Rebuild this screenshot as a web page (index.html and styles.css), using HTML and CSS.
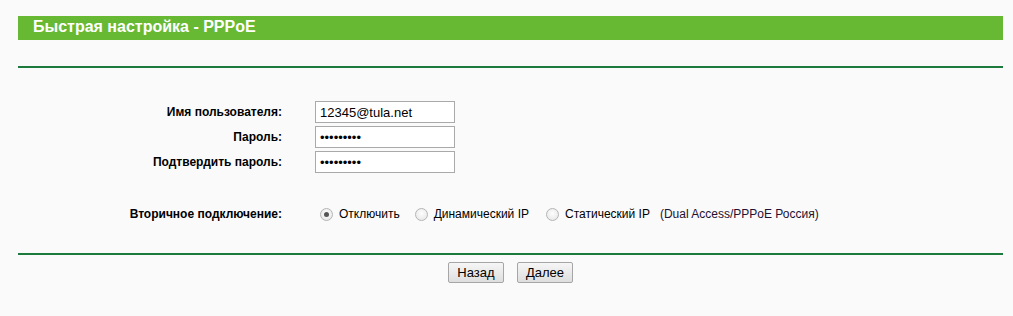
FILE: index.html
```html
<!DOCTYPE html>
<html lang="ru">
<head>
<meta charset="utf-8">
<title>Быстрая настройка - PPPoE</title>
<link rel="stylesheet" href="styles.css">
</head>
<body>
<div class="page">
  <div class="titlebar">Быстрая настройка - PPPoE</div>
  <div class="rule rule-top"></div>

  <div class="form">
    <label class="lbl" for="user">Имя пользователя:</label>
    <input class="field" id="user" type="text" value="12345@tula.net">
    <label class="lbl" for="pwd">Пароль:</label>
    <input class="field" id="pwd" type="password" value="123456789">
    <label class="lbl" for="pwd2">Подтвердить пароль:</label>
    <input class="field" id="pwd2" type="password" value="123456789">
  </div>

  <div class="secondary">
    <div class="lbl">Вторичное подключение:</div>
    <div class="options">
      <label class="opt"><input class="radio" type="radio" name="sec" checked><span>Отключить</span></label>
      <label class="opt"><input class="radio" type="radio" name="sec"><span>Динамический IP</span></label>
      <label class="opt"><input class="radio" type="radio" name="sec"><span>Статический IP</span></label>
      <span class="note">(Dual Access/PPPoE Россия)</span>
    </div>
  </div>

  <div class="rule rule-bottom"></div>

  <div class="actions">
    <button class="btn" type="button">Назад</button>
    <button class="btn" type="button">Далее</button>
  </div>
</div>
</body>
</html>
```

FILE: styles.css
```css
html, body {
  margin: 0;
  padding: 0;
  background: #fafafa;
}

body {
  font-family: "Liberation Sans", Arial, sans-serif;
  color: #000;
}

.page {
  width: 985px;
  padding: 16px 0 0 18px;
}

.titlebar {
  height: 24px;
  line-height: 22px;
  background: #67b934;
  color: #fff;
  font-weight: bold;
  font-size: 16px;
  padding-left: 15px;
}

.rule {
  height: 2px;
  background: #1c7a3d;
}

.rule-top {
  margin-top: 26px;
}

.form {
  display: grid;
  grid-template-columns: 264px 140px;
  column-gap: 33px;
  row-gap: 3px;
  margin-top: 33px;
  align-items: center;
}

.lbl {
  text-align: right;
  font-weight: bold;
  font-size: 12px;
}

.field {
  box-sizing: border-box;
  width: 140px;
  height: 22px;
  margin: 0;
  padding: 0 4px;
  border: 1px solid #a9a9a9;
  background: #fff;
  font-family: "Liberation Sans", Arial, sans-serif;
  font-size: 13px;
  color: #000;
  outline: none;
}

.secondary {
  display: grid;
  grid-template-columns: 264px auto;
  column-gap: 33px;
  align-items: center;
  margin-top: 31px;
  height: 20px;
}

.options {
  display: flex;
  align-items: center;
  padding-left: 5px;
  font-size: 12px;
}

.opt {
  display: flex;
  align-items: center;
  gap: 6px;
  margin-right: 15px;
}

.opt:nth-child(2) {
  margin-right: 17px;
}

.opt:nth-child(3) {
  margin-right: 10px;
}

.radio {
  appearance: none;
  -webkit-appearance: none;
  margin: 0;
  width: 13px;
  height: 13px;
  border-radius: 50%;
  border: 1px solid #b5b5b5;
  background: radial-gradient(circle at 50% 40%, #fdfdfd 0%, #e4e4e4 100%);
  box-sizing: border-box;
  position: relative;
}

.radio:checked::after {
  content: "";
  position: absolute;
  left: 3px;
  top: 3px;
  width: 5px;
  height: 5px;
  border-radius: 50%;
  background: #555;
}

.note {
  color: #221133;
}

.rule-bottom {
  margin-top: 29px;
}

.actions {
  display: flex;
  justify-content: center;
  gap: 13px;
  margin-top: 7px;
}

.btn {
  box-sizing: border-box;
  height: 21px;
  min-width: 56px;
  padding: 0 8px;
  border: 1px solid #a6a6a6;
  border-radius: 2px;
  background: linear-gradient(#f6f6f6, #dedede);
  font-family: "Liberation Sans", Arial, sans-serif;
  font-size: 13px;
  color: #000;
}
```
